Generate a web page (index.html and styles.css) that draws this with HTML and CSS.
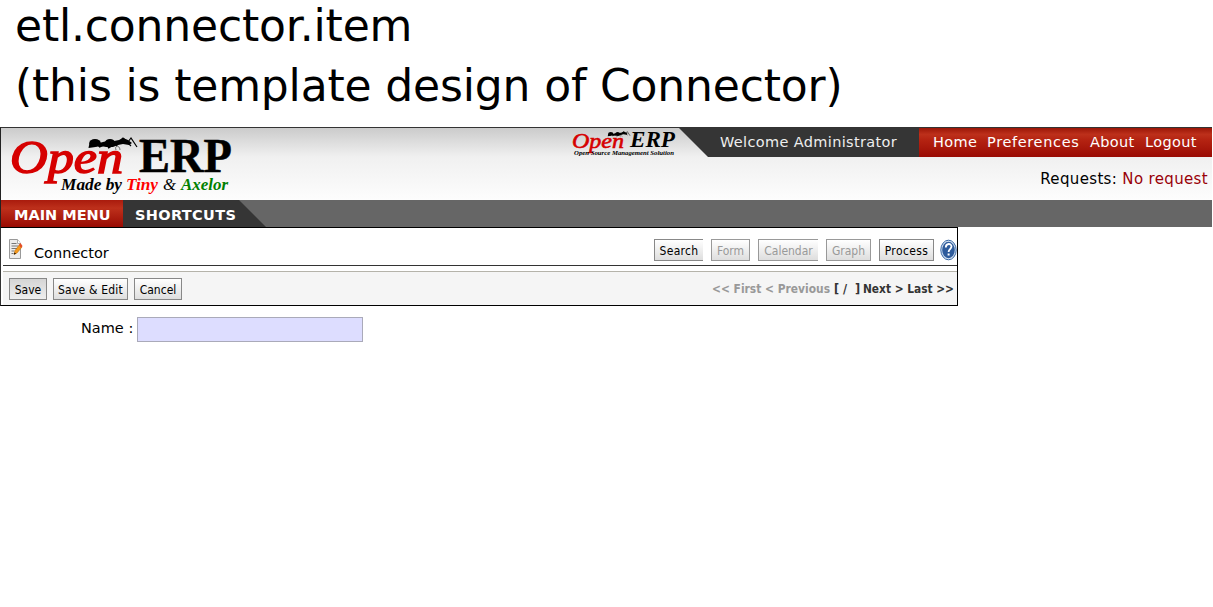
FILE: index.html
```
<!DOCTYPE html>
<html lang="en">
<head>
<meta charset="utf-8">
<title>etl.connector.item</title>
<link rel="stylesheet" href="styles.css">
</head>
<body>
<header class="title"><div class="title-a">etl.connector.item</div><div class="title-b">(this is template design of Connector)</div></header>
<section class="banner">
  <svg class="logo" width="240" height="72" viewBox="0 0 240 72">
    <g font-family="Liberation Serif, serif" font-weight="bold">
      <text x="9" y="45" font-size="46" font-style="italic" font-weight="normal" fill="#d60000" stroke="#d60000" stroke-width="1.500" textLength="113" lengthAdjust="spacingAndGlyphs">Open</text>
      <text x="138" y="44" font-size="49" fill="#000" stroke="#000" stroke-width=".5" textLength="93" lengthAdjust="spacingAndGlyphs">ERP</text>
      <g font-size="16.500" font-style="italic">
        <text x="60" y="62" textLength="61" lengthAdjust="spacingAndGlyphs">Made by</text>
        <text x="125" y="62" fill="#f00" textLength="32" lengthAdjust="spacingAndGlyphs">Tiny</text>
        <text x="162" y="62" font-weight="normal" textLength="13" lengthAdjust="spacingAndGlyphs">&amp;</text>
        <text x="180" y="62" fill="#008000" textLength="47" lengthAdjust="spacingAndGlyphs">Axelor</text>
      </g>
    </g>
    <g id="ant"><ellipse cx="94" cy="15" rx="5.800" ry="4"/><path d="M87.500 20l1-5 4-1 2 5z"/><ellipse cx="109" cy="14.500" rx="5" ry="3.600"/><path d="M98 15l8-2 7 0 5-1 4-2 5 2 4 3-3 2-6-1-5 1-5 2-7 0-5-1-3 1z"/><path d="M103 17l-5 2M112 17l-5 3M118 14l-3 4" fill="none" stroke="#000" stroke-width="1.800"/><path d="M115 22c-2-5 4-5 4 0" fill="none" stroke="#555" stroke-width=".8"/><path d="M119 13l3-3 5 4 3-4 6 9M126 14l4 4" fill="none" stroke="#000" stroke-width="1.200"/></g>
  </svg>
  <svg class="small-logo" width="106" height="29" viewBox="0 0 106 29">
    <g font-family="Liberation Serif, serif" font-style="italic">
      <text x="0" y="20" font-size="22" fill="#d60000" stroke="#d60000" stroke-width=".6" textLength="52" lengthAdjust="spacingAndGlyphs">Open</text>
      <text x="58" y="19" font-size="23" font-weight="bold" textLength="45" lengthAdjust="spacingAndGlyphs">ERP</text>
      <text x="2" y="27" font-size="6.500" font-weight="bold" textLength="100" lengthAdjust="spacingAndGlyphs">Open Source Management Solution</text>
    </g>
    <use href="#ant" transform="translate(-4.500 -1) scale(.46)"/>
  </svg>
  <div class="account">
    <div class="top">
      <div class="welcome">Welcome Administrator</div>
      <nav class="links"><a class="home">Home</a><a class="pref">Preferences</a><a class="about">About</a><a>Logout</a></nav>
    </div>
    <div class="requests">Requests: <span>No request</span></div>
  </div>
</section>
<nav class="menu"><div class="main">MAIN MENU</div><div class="short">SHORTCUTS</div></nav>
<section class="panel">
  <div class="heading">
    <svg class="edit" width="14" height="20" viewBox="0 0 14 20">
      <path d="M.5.500h8l3 4v15H.5z" fill="#ececec" stroke="#999"/><path d="M8.500.500v4h3" fill="#fff" stroke="#aaa"/>
      <path d="M2.500 4.500h5M2.500 7h7M2.500 9.500h6M2.500 12h3M2.500 14.500h2" stroke="#777"/>
      <path d="M5 15.500l1-4 5-6.500 2 3-5 6z" fill="#f59a1c" stroke="#b86200" stroke-width=".5"/><path d="M10 6l1.500-2 2 3-1.500 2z" fill="#e44d25"/><path d="M5 15.500l.5-2 1.500 1.200z"/>
    </svg>
    <h1>Connector</h1>
    <div class="views">
      <span class="btn open search">Search</span><span class="btn off form">Form</span><span class="btn off open cal">Calendar</span><span class="btn off graph">Graph</span><span class="btn process">Process</span>
      <svg class="help" width="17" height="22" viewBox="0 0 17 22"><ellipse cx="8.500" cy="11" rx="7.700" ry="9.800" fill="#d5e2f1" stroke="#3768a6" stroke-width="1"/><ellipse cx="8.500" cy="11" rx="6.300" ry="8.200" fill="#2e5c9c"/><path d="M5.800 8.500c0-4.500 5.700-4.500 5.700-.9 0 2.400-2.900 2.700-2.900 5.300" fill="none" stroke="#fff" stroke-width="1.800"/><path d="M7.600 14.500h2v2h-2z" fill="#fff"/></svg>
    </div>
  </div>
  <div class="toolbar">
    <span class="btn save">Save</span><span class="btn save-edit">Save &amp; Edit</span><span class="btn cancel">Cancel</span>
    <svg class="pager" width="243" height="20"><text class="dim" x="0" y="14" textLength="118" lengthAdjust="spacingAndGlyphs">&lt;&lt; First &lt; Previous</text><text x="122" y="14" textLength="26" lengthAdjust="spacingAndGlyphs" xml:space="preserve">[ /  ]</text><text x="151" y="14" textLength="91" lengthAdjust="spacingAndGlyphs">Next &gt; Last &gt;&gt;</text></svg>
  </div>
</section>
<label class="field"><span>Name :</span><input type="text"></label>
</body>
</html>
```
FILE: styles.css
```
* { box-sizing: border-box; }
body { margin: 0; height: 607px; overflow: hidden; background: #fff; color: #000; font-family: "DejaVu Sans", sans-serif; }
.title { height: 127px; padding-left: 15px; font-size: 44px; line-height: 60px; white-space: nowrap; overflow: hidden; }
.title-a { margin-top: -4px; letter-spacing: -.17px; }
.title-b { letter-spacing: -.16px; }
.banner { display: flex; width: 1212px; height: 73px; border-top: 1px solid #333; border-left: 1px solid #222; background: linear-gradient(#cbcbcb, #f0f0f0 40%, #fdfdfd); }
.logo { flex: none; }
.small-logo { flex: none; margin-left: 331px; }
.account { width: 533px; margin-left: 1px; }
.top { display: flex; height: 29px; font-size: 14.500px; line-height: 29px; letter-spacing: .35px; white-space: nowrap; }
.welcome { width: 240px; padding-left: 41px; color: #eee; background: #353535; clip-path: polygon(0 0, 100% 0, 100% 100%, 29px 100%); }
.links { display: flex; flex: 1; padding-left: 14px; color: #fff; background: linear-gradient(#9b1607, #bd301b 22%, #b52412 40%, #9a0b04); }
.home { width: 54px; }
.pref { width: 103px; letter-spacing: .65px; }
.about { width: 55px; }
.requests { padding: 13px 4px 0 0; font-size: 15px; line-height: 18px; letter-spacing: .35px; text-align: right; }
.requests span { color: #990008; }
.menu { display: flex; width: 1212px; height: 27px; border-left: 1px solid #222; background: #666; color: #fff; font-size: 14.500px; font-weight: bold; line-height: 31px; white-space: nowrap; }
.main { width: 122px; padding-left: 13px; background: linear-gradient(#a91b0d, #bd301b 30%, #990b03); }
.short { width: 143px; padding-left: 12px; letter-spacing: .35px; background: #353535; clip-path: polygon(0 0, 116px 0, 100% 100%, 0 100%); }
.panel { width: 958px; height: 79px; border: 1px solid #000; border-left-color: #333; padding-left: 2px; }
.heading { display: flex; height: 38px; padding-left: 6px; border-bottom: 1px solid #333; }
.edit { flex: none; margin-top: 11px; }
h1 { margin: 16px 0 0 11px; font-size: 14.500px; font-weight: normal; line-height: 18px; }
.views { display: flex; margin: 11px 1px 0 auto; }
.btn { flex: none; height: 22px; border: 1px solid #888; background: linear-gradient(#fff, #dedede); font: 12px/22px "DejaVu Sans Condensed", "DejaVu Sans", sans-serif; font-stretch: condensed; text-align: center; white-space: nowrap; }
.off { color: #999; border-color: #999; }
.open { border-right: 0; }
.search { width: 49px; margin-right: 8px; letter-spacing: .3px; }
.form { width: 39px; margin-right: 8px; }
.cal { width: 60px; margin-right: 8px; }
.graph { width: 45px; margin-right: 8px; }
.process { width: 55px; margin-right: 6px; letter-spacing: .4px; }
.help { flex: none; margin-right: -1px; }
.toolbar { display: flex; height: 34px; margin-top: 5px; padding: 6px 0 0 6px; border-top: 1px solid #b5b3aa; background: #f5f5f5; }
.save { width: 38px; margin-right: 6px; background: linear-gradient(#d5d5d5, #eee); }
.save-edit { width: 75px; margin-right: 6px; letter-spacing: .2px; }
.cancel { width: 48px; }
.pager { margin: 1px 2px 0 auto; font: bold 12px "DejaVu Sans Condensed", "DejaVu Sans", sans-serif; font-stretch: condensed; fill: #333; }
.dim { fill: #999; }
.field { display: flex; padding: 11px 0 0 81px; font-size: 14.500px; line-height: 22px; white-space: nowrap; }
.field span { width: 56px; }
.field input { width: 226px; height: 25px; padding: 2px; border: 1px solid #aaaab9; background: #ddf; }
```
